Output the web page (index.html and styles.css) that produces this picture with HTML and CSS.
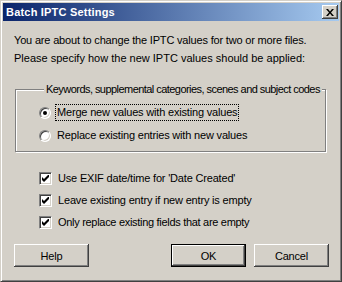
FILE: index.html
```html
<!DOCTYPE html>
<html>
<head>
  <title>Batch IPTC Settings</title>
  <link rel="stylesheet" href="styles.css">
</head>
<body>
  <div class="window">
    <!-- Titelbalk -->
    <div class="titlebar">
      <span class="title">Batch IPTC Settings</span>
      <span class="close">
        <svg width="8" height="7" viewBox="0 0 8 7">
          <path d="M0 0h2l2 2.5 2-2.5h2l-3 3.5 3 3.5h-2l-2-2.5-2 2.5h-2l3-3.5z" fill="#000"/>
        </svg>
      </span>
    </div>

    <div class="content">
      <p class="intro">You are about to change the IPTC values for two or more files.<br>
      <span class="wide">Please specify how the new IPTC values should be applied:</span></p>

      <!-- Keuze voor keywords -->
      <fieldset class="group">
        <legend>Keywords, supplemental categories, scenes and subject codes</legend>
        <div class="option">
          <span class="radio checked"></span>
          <span class="label focus">Merge new values with existing values</span>
        </div>
        <div class="option">
          <span class="radio"></span>
          <span class="label">Replace existing entries with new values</span>
        </div>
      </fieldset>

      <!-- Checkboxen -->
      <div class="checks">
        <div class="option">
          <span class="check"><svg width="7" height="7" viewBox="0 0 7 7"><path d="M0 2v3l2 2 5-5v-3l-5 5z" fill="#000"/></svg></span>
          <span class="label">Use EXIF date/time for 'Date Created'</span>
        </div>
        <div class="option">
          <span class="check"><svg width="7" height="7" viewBox="0 0 7 7"><path d="M0 2v3l2 2 5-5v-3l-5 5z" fill="#000"/></svg></span>
          <span class="label">Leave existing entry if new entry is empty</span>
        </div>
        <div class="option">
          <span class="check"><svg width="7" height="7" viewBox="0 0 7 7"><path d="M0 2v3l2 2 5-5v-3l-5 5z" fill="#000"/></svg></span>
          <span class="label tight">Only replace existing fields that are empty</span>
        </div>
      </div>

      <!-- Knoppen -->
      <div class="buttons">
        <span class="btn">Help</span>
        <span class="spacer"></span>
        <span class="btn default">OK</span>
        <span class="btn">Cancel</span>
      </div>
    </div>
  </div>
</body>
</html>
```

FILE: styles.css
```css
/* Pagina zonder marge, klassieke Windows kleur */
body {
  margin: 0;
  background: #d4d0c8;
  font-family: "Liberation Sans", Arial, sans-serif;
  font-size: 11px;
  letter-spacing: -0.18px;
  color: #000;
}

/* Venster met verhoogde rand */
.window {
  width: 342px;
  height: 282px;
  box-sizing: border-box;
  border: 1px solid;
  border-color: #d4d0c8 #404040 #404040 #d4d0c8;
  background: #d4d0c8;
  box-shadow: inset 1px 1px 0 #fff, inset -1px -1px 0 #808080;
  padding: 2px;
}

/* Titelbalk met verloop */
.titlebar {
  height: 18px;
  background: linear-gradient(to right, #0a246a, #a6caf0);
  display: flex;
  align-items: center;
  justify-content: space-between;
  padding: 0 1px 0 3px;
}

.title {
  color: #fff;
  font-weight: bold;
  font-size: 11px;
  letter-spacing: 0.2px;
}

.close {
  width: 16px;
  height: 14px;
  box-sizing: border-box;
  background: #d4d0c8;
  box-shadow: inset -1px -1px 0 #404040, inset 1px 1px 0 #fff, inset -2px -2px 0 #808080;
  display: flex;
  align-items: center;
  justify-content: center;
  padding-right: 1px;
}

.content {
  padding: 10px 0 0 11px;
}

.intro {
  margin: 0;
  line-height: 18px;
}

.wide {
  letter-spacing: 0;
}

/* Groepskader met gegraveerde rand */
.group {
  margin: 16px 0 0 1px;
  padding: 5px 0 4px 23px;
  width: 311px;
  box-sizing: border-box;
  border: 1px solid #808080;
  box-shadow: inset 1px 1px 0 #fff, 1px 1px 0 #fff;
}

.group legend {
  margin-left: 5px;
  padding: 0 2px;
  background: #d4d0c8;
  line-height: 13px;
  white-space: nowrap;
  letter-spacing: -0.55px;
}

.option {
  display: flex;
  align-items: center;
  height: 23px;
}

.label {
  padding: 0 1px;
  margin-left: 4px;
  line-height: 15px;
  border: 1px dotted transparent;
}

.label.focus {
  border-color: #000;
}

.label.tight {
  letter-spacing: -0.3px;
}

.radio {
  width: 12px;
  height: 12px;
  box-sizing: border-box;
  border-radius: 50%;
  border: 1px solid;
  border-color: #808080 #fff #fff #808080;
  background: #fff;
  box-shadow: inset 1px 1px 0 #404040, inset -1px -1px 0 #d4d0c8;
  position: relative;
}

.radio.checked::after {
  content: "";
  position: absolute;
  left: 3px;
  top: 3px;
  width: 4px;
  height: 4px;
  border-radius: 50%;
  background: #000;
}

/* Checkboxen */
.checks {
  padding: 15px 0 0 25px;
}

.checks .option {
  height: 22px;
}

.check {
  width: 13px;
  height: 13px;
  box-sizing: border-box;
  border: 1px solid;
  border-color: #808080 #fff #fff #808080;
  background: #fff;
  box-shadow: inset 1px 1px 0 #404040, inset -1px -1px 0 #d4d0c8;
  display: flex;
  align-items: center;
  justify-content: center;
}

/* Knoppenbalk */
.buttons {
  display: flex;
  gap: 8px;
  margin-top: 11px;
  width: 315px;
}

.spacer {
  flex: 1;
}

.btn {
  width: 75px;
  height: 23px;
  box-sizing: border-box;
  display: flex;
  align-items: center;
  justify-content: center;
  background: #d4d0c8;
  box-shadow: inset -1px -1px 0 #404040, inset 1px 1px 0 #fff, inset -2px -2px 0 #808080;
}

.btn.default {
  border: 1px solid #000;
}
```
